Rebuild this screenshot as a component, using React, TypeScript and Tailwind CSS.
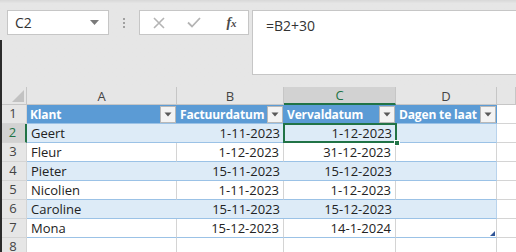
import React from "react";

const FONT = { fontFamily: '"Open Sans", "Liberation Sans", sans-serif' };

const data: [string, string, string][] = [
  ["Geert", "1-11-2023", "1-12-2023"],
  ["Fleur", "1-12-2023", "31-12-2023"],
  ["Pieter", "15-11-2023", "15-12-2023"],
  ["Nicolien", "1-11-2023", "1-12-2023"],
  ["Caroline", "15-11-2023", "15-12-2023"],
  ["Mona", "15-12-2023", "14-1-2024"],
];

function FilterBtn() {
  return (
    <div className="w-[16px] h-[17px] shrink-0 bg-[#f3f3f3] border border-[#b8b8b8] flex items-center justify-center">
      <svg width="8" height="5" viewBox="0 0 8 5">
        <path d="M0.5 0.5 L7.5 0.5 L4 4.5 Z" fill="#595959" />
      </svg>
    </div>
  );
}

function HeaderCell({ label }: { label: string }) {
  return (
    <div className="h-[19px] bg-[#5b9bd5] border-b border-[#9bc2e6] flex items-center pl-[3px] pr-[1px] overflow-hidden">
      <span className="flex-1 text-white font-bold text-[12px] tracking-[-0.15px] leading-[19px] whitespace-nowrap overflow-hidden">{label}</span>
      <FilterBtn />
    </div>
  );
}

export default function App() {
  return (
    <div className="relative w-[516px] h-[252px] overflow-hidden bg-[#e6e6e6] text-[#222]" style={FONT}>
      {/* window edge */}
      <div className="absolute left-0 top-[40px] bottom-0 w-[2px] bg-[#2b2b2b] z-20" />

      {/* formula area */}
      <div className="h-[87px] bg-gradient-to-b from-[#d8d8d8] from-0% to-[#e6e6e6] to-[4%] flex items-start pt-[10px] pl-[7px]">
        <div className="w-[102px] h-[25px] bg-white border border-[#c6c6c6] flex items-center pl-[7px] pr-[9px]">
          <span className="flex-1 text-[14px] text-[#333]">C2</span>
          <svg width="9" height="5" viewBox="0 0 9 5">
            <path d="M0 0 L9 0 L4.5 5 Z" fill="#7a7a7a" />
          </svg>
        </div>
        <div className="w-[30px] h-[25px] flex flex-col items-center justify-center gap-[2px]">
          <div className="w-[2px] h-[2px] bg-[#a0a0a0]" />
          <div className="w-[2px] h-[2px] bg-[#a0a0a0]" />
          <div className="w-[2px] h-[2px] bg-[#a0a0a0]" />
        </div>
        <div className="w-[110px] h-[25px] bg-white border border-[#c6c6c6] flex items-center">
          <div className="w-[36px] flex justify-center pl-[2px]">
            <svg width="12" height="12" viewBox="0 0 12 12">
              <path d="M1 1 L11 11 M11 1 L1 11" stroke="#b4b4b4" strokeWidth="1.6" />
            </svg>
          </div>
          <div className="w-[36px] flex justify-center">
            <svg width="14" height="11" viewBox="0 0 14 11">
              <path d="M1 5.5 L5 9.5 L13 1" stroke="#b4b4b4" strokeWidth="1.8" fill="none" />
            </svg>
          </div>
          <div className="w-[36px] flex justify-center pl-[3px]">
            <span className="italic text-[14px] text-[#4a4a4a] font-bold" style={{ fontFamily: '"Liberation Serif", serif' }}>
              f<span className="text-[11px]">x</span>
            </span>
          </div>
        </div>
        <div className="ml-[3px] flex-1 h-[65px] bg-white border border-r-0 border-[#c6c6c6] pl-[13px] pt-[4px] text-[14px] text-[#333]">
          =B2+30
        </div>
      </div>

      {/* sheet */}
      <div className="grid grid-cols-[27px_150px_107px_112px_101px_1fr] grid-rows-[18px_repeat(8,19px)] bg-white text-[13px]">
        {/* column header row */}
        <div className="bg-[#e6e6e6] border-r border-b border-[#c6c6c6] relative">
          <svg className="absolute right-[2px] bottom-[2px]" width="12" height="12" viewBox="0 0 12 12">
            <path d="M12 0 L12 12 L0 12 Z" fill="#c2c2c2" />
          </svg>
        </div>
        {["A", "B", "C", "D", ""].map((l) => (
          <div
            key={l || "E"}
            className={
              l === "C"
                ? "bg-[#d2d2d2] border-r border-[#c6c6c6] border-b-2 border-b-[#217346] flex items-center justify-center text-[#217346] leading-[18px]"
                : "bg-[#e6e6e6] border-r border-b border-[#c6c6c6] flex items-center justify-center text-[#444] leading-[18px]"
            }
          >
            {l}
          </div>
        ))}

        {/* row 1 */}
        <div className="bg-[#e6e6e6] border-r border-b border-[#d4d4d4] flex items-center justify-center text-[#444]">1</div>
        <HeaderCell label="Klant" />
        <HeaderCell label="Factuurdatum" />
        <HeaderCell label="Vervaldatum" />
        <HeaderCell label="Dagen te laat" />
        <div className="border-b border-[#d4d4d4]" />

        {data.map((r, i) => {
          const rowNum = i + 2;
          const band = i % 2 === 0;
          const sel = rowNum === 2;
          const cellBase = band
            ? "bg-[#ddebf7] border-b border-[#9bc2e6]"
            : "bg-white border-b border-[#9bc2e6] border-r border-r-[#d4d4d4]";
          return (
            <React.Fragment key={rowNum}>
              <div
                className={
                  sel
                    ? "bg-[#d2d2d2] border-r-2 border-[#217346] border-b border-b-[#d4d4d4] flex items-center justify-center text-[#217346]"
                    : "bg-[#e6e6e6] border-r border-b border-[#d4d4d4] flex items-center justify-center text-[#444]"
                }
              >
                {rowNum}
              </div>
              <div className={`${cellBase} flex items-center pl-[4px] leading-[19px]`}>{r[0]}</div>
              <div className={`${cellBase} flex items-center justify-end pr-[4px] leading-[19px]`}>{r[1]}</div>
              <div className={`${cellBase} flex items-center justify-end pr-[4px] leading-[19px] relative`}>
                {r[2]}
                {sel && (
                  <>
                    <div className="absolute left-[-1px] top-[-1px] right-[-1px] bottom-[-1px] border-2 border-[#217346] z-10" />
                    <div className="absolute right-[-4px] bottom-[-4px] w-[6px] h-[6px] bg-[#217346] border border-white z-10" />
                  </>
                )}
              </div>
              <div className={`${band ? "bg-[#ddebf7] border-b border-[#9bc2e6] border-r border-r-[#b9d3ec]" : "bg-white border-b border-[#9bc2e6] border-r border-r-[#d4d4d4]"} relative`}>
                {rowNum === 7 && (
                  <svg className="absolute right-[1px] bottom-[1px]" width="5" height="5" viewBox="0 0 5 5">
                    <path d="M5 0 L5 5 L0 5 Z" fill="#2f5597" />
                  </svg>
                )}
              </div>
              <div className="border-b border-[#d4d4d4]" />
            </React.Fragment>
          );
        })}

        {/* row 8 */}
        <div className="bg-[#e6e6e6] border-r border-b border-[#d4d4d4] flex items-center justify-center text-[#444]">8</div>
        <div className="border-r border-b border-[#d4d4d4]" />
        <div className="border-r border-b border-[#d4d4d4]" />
        <div className="border-r border-b border-[#d4d4d4]" />
        <div className="border-r border-b border-[#d4d4d4]" />
        <div className="border-b border-[#d4d4d4]" />
      </div>
    </div>
  );
}
